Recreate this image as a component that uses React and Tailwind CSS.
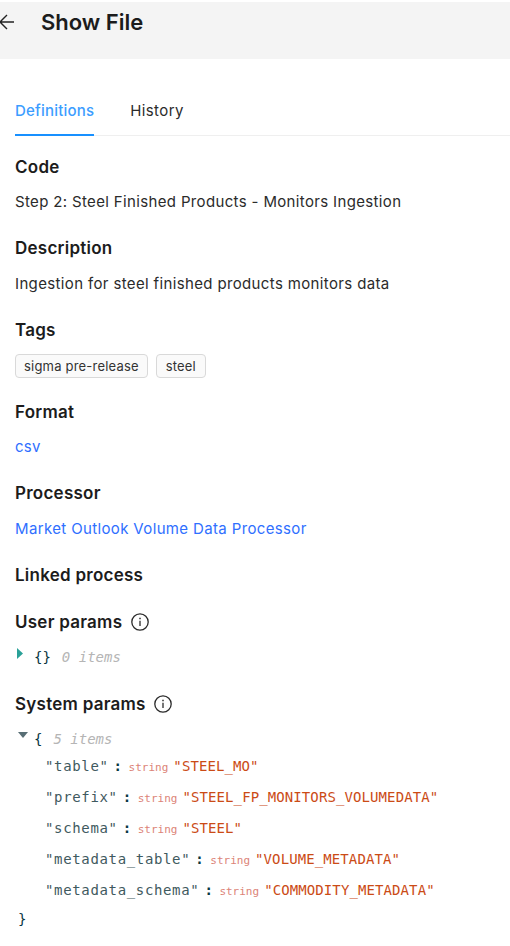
const params = [
  { name: 'table', value: 'STEEL_MO' },
  { name: 'prefix', value: 'STEEL_FP_MONITORS_VOLUMEDATA' },
  { name: 'schema', value: 'STEEL' },
  { name: 'metadata_table', value: 'VOLUME_METADATA' },
  { name: 'metadata_schema', value: 'COMMODITY_METADATA' },
];

function InfoIcon() {
  return (
    <svg className="h-[18px] w-[18px]" viewBox="0 0 18 18" fill="none" stroke="#2b2b2b">
      <circle cx="9" cy="9" r="8.2" strokeWidth="1.3" />
      <path d="M9 7.8V13" strokeWidth="1.3" />
      <path d="M9 4.8V6.3" strokeWidth="1.5" />
    </svg>
  );
}

function Heading({ children }) {
  return (
    <h2 className="flex h-6 items-center gap-[8.5px] text-[17px] font-semibold leading-6 tracking-[0.25px] text-[#1c1c1c]">
      {children}
    </h2>
  );
}

function Section({ title, children }) {
  return (
    <section className="h-[81.7px]">
      <Heading>{title}</Heading>
      <div className="mt-[11.5px] h-6 text-[15px] leading-6">{children}</div>
    </section>
  );
}

function Tag({ children }) {
  return (
    <span className="flex h-6 min-w-[50px] items-center justify-center rounded-[4px] border border-[#d9d9d9] bg-[#fafafa] px-[8px] text-[13px] tracking-[0.2px] text-[#333]">
      {children}
    </span>
  );
}

function ParamRow({ name, value }) {
  return (
    <div className="flex h-[31.1px] items-baseline whitespace-pre pl-[30px]">
      <span className="tracking-[0.65px] text-[#3f5a60]">"{name}"</span>
      <span className="ml-[5px] w-[15px] font-bold text-[#073642]">:</span>
      <span className="mr-[5px] text-[11px] text-[#dc8377]">string</span>
      <span className="tracking-[0.1px] text-[#cb4b16]">"{value}"</span>
    </div>
  );
}

export default function App() {
  return (
    <div className="h-[946px] w-[510px] overflow-hidden bg-white pt-[2px] font-['Inter',sans-serif] text-[#2b2b2b]">
      <header className="flex h-[57px] items-start bg-[#f4f4f4]">
        <svg className="mt-[11px] h-[18px] w-[14px]" viewBox="0 0 14 18" fill="none" stroke="#222" strokeWidth="1.4">
          <path d="M14 9H0M7 2L0 9L7 16" />
        </svg>
        <h1 className="ml-[27px] mt-[5px] text-[22px] font-semibold leading-[30px] text-[#1c1c1c]">Show File</h1>
      </header>

      <nav className="ml-[15px] mt-[27px] flex h-[50px] gap-9 border-b border-[#efefef] text-[15px] leading-[50px]">
        <span className="h-[50px] border-b-2 border-[#1890ff] font-medium tracking-[0.2px] text-[#3b9dff]">Definitions</span>
        <span className="tracking-[0.4px]">History</span>
      </nav>

      <main className="pl-[15px] pt-[18.6px]">
        <Section title="Code">
          <span className="tracking-[0.35px]">Step 2: Steel Finished Products - Monitors Ingestion</span>
        </Section>
        <Section title="Description">
          <span className="tracking-[0.36px]">Ingestion for steel finished products monitors data</span>
        </Section>
        <Section title="Tags">
          <div className="flex gap-2 pt-[0.5px]">
            <Tag>sigma pre-release</Tag>
            <Tag>steel</Tag>
          </div>
        </Section>
        <Section title="Format">
          <a className="tracking-[0.2px] text-[#2f6fff]">csv</a>
        </Section>
        <Section title="Processor">
          <a className="tracking-[0.36px] text-[#2f6fff]">Market Outlook Volume Data Processor</a>
        </Section>
        <div className="h-[47.4px]">
          <Heading>Linked process</Heading>
        </div>
        <section className="h-[82px]">
          <Heading>User params <InfoIcon /></Heading>
          <div className="mt-[11px] flex h-6 items-start pl-[2px] font-['DejaVu_Sans_Mono',monospace] text-[14px] leading-6">
            <svg className="mt-[3px] h-[11px] w-[6px]" viewBox="0 0 6 11"><path d="M0 0L6 5.5L0 11Z" fill="#2aa198" /></svg>
            <span className="ml-[11px] text-[#073642]">{'{}'}</span>
            <span className="ml-[11px] italic text-[#b5b5b5]">0 items</span>
          </div>
        </section>
        <section>
          <Heading>System params <InfoIcon /></Heading>
          <div className="mt-[11px] font-['DejaVu_Sans_Mono',monospace] text-[14px] leading-6">
            <div className="flex h-[26.6px] items-start pl-[3px]">
              <svg className="mt-[5px] h-[6px] w-[10px]" viewBox="0 0 10 6"><path d="M0 0H10L5 6Z" fill="#586e75" /></svg>
              <span className="ml-[6px] text-[#073642]">{'{'}</span>
              <span className="ml-[11px] italic text-[#b5b5b5]">5 items</span>
            </div>
            {params.map((p) => <ParamRow key={p.name} {...p} />)}
            <div className="-mt-[2.4px] pl-[3px] text-[#073642]">{'}'}</div>
          </div>
        </section>
      </main>
    </div>
  );
}
